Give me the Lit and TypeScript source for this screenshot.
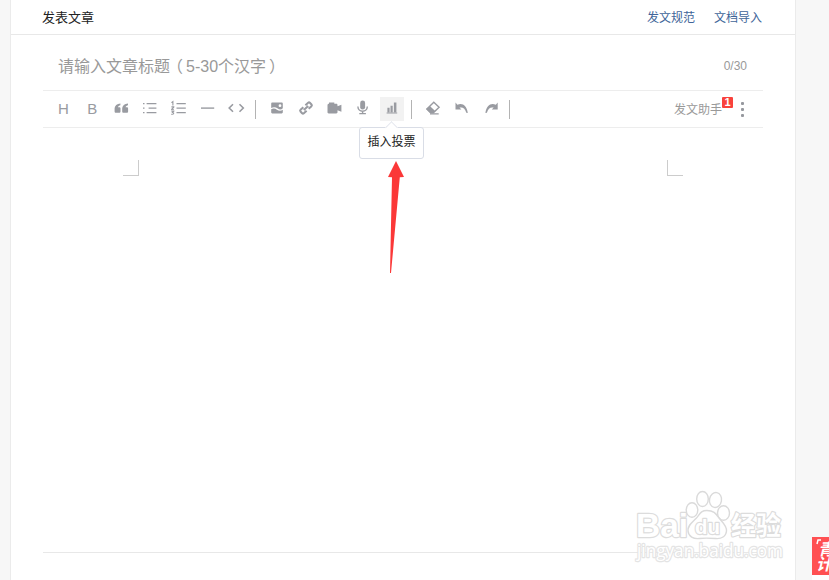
import { LitElement, html, svg, css } from "lit";
import { customElement, property } from "lit/decorators.js";

// Toolbar glyphs, each drawn on a 24x24 grid.
const icons: Record<string, unknown> = {
  quote: svg`<path d="M11.4 6.4C8 6.6 5.6 8.6 5.6 12v2.4c0 .8.5 1.3 1.3 1.3h3.3c.8 0 1.3-.5 1.3-1.3v-2.900c0-.8-.5-1.300-1.300-1.300H9c.2-1.200 1.200-1.800 2.400-2z"/><path d="M19 6.400c-3.400.2-5.800 2.200-5.800 5.600v2.400c0 .8.5 1.300 1.300 1.300h3.300c.8 0 1.300-.5 1.300-1.300v-2.900c0-.8-.5-1.300-1.300-1.300h-1.200c.2-1.200 1.200-1.800 2.400-2z"/>`,
  ul: svg`<path d="M6 5.900h1.500v1.400H6zM9.600 5.900h9.800v1.400H9.600zM6 10.400h1.500v1.400H6zM11.600 10.400h7.800v1.400h-7.800zM6 14.900h1.500v1.400H6zM9.600 14.900h9.800v1.400H9.600z"/>`,
  ol: svg`<path d="M10.500 5.900h9.300v1.400h-9.300zM10.500 10.400h9.300v1.400h-9.300zM10.500 14.900h9.300v1.400h-9.300z"/><path d="M5.400 5.600l1.500-1v4M5.400 9.900h2.400c0 1.200-2.200 1.500-2.200 2.800h2.400M5.400 14.200h2.300l-1.200 1.300c1.800.2 1.700 2.200-1.300 1.700" fill="none" stroke="currentColor" stroke-width="1.100"/>`,
  hr: svg`<path d="M6 10.400h13.200v1.400H6z"/>`,
  code: svg`<path d="M9 7.200L5.200 11 9 14.800M15.500 7.200l3.800 3.800-3.800 3.800" fill="none" stroke="currentColor" stroke-width="1.600"/>`,
  image: svg`<path fill-rule="evenodd" d="M7.300 5.500h9.400c.6 0 1.100.5 1.100 1.100v4.700c-1.500 1.600-3.300 1.600-5 .3-2-1.600-4.400-1.800-6.600-.6V6.600c0-.6.500-1.100 1.100-1.100zM15 7.300a1.400 1.400 0 100 2.800 1.400 1.400 0 000-2.800z"/><path d="M6.200 12.200c2-1.300 4-.9 5.700.5 1.900 1.400 4.100 1.400 5.900.1v2.500c0 .6-.5 1.100-1.100 1.100H7.300c-.6 0-1.100-.5-1.100-1.100z"/>`,
  link: svg`<g transform="rotate(-43 12 11)" fill="none" stroke="currentColor" stroke-width="2"><path d="M10.600 8.600H6.800a1.200 1.200 0 00-1.200 1.200v2.400a1.200 1.200 0 001.200 1.200h3.800M13.400 8.600h3.800a1.200 1.200 0 011.200 1.200v2.400a1.200 1.200 0 01-1.200 1.200h-3.800M9 11h6"/></g>`,
  video: svg`<path d="M7 5.400h5.300v1.400h2c.7 0 1.200.5 1.200 1.200v1.300l3.900-1.500v7l-3.900-1.500v1.900c0 .7-.5 1.200-1.200 1.200H6.700c-.7 0-1.200-.5-1.200-1.200V8c0-.6.500-1.200 1.500-1.200z"/>`,
  mic: svg`<rect x="9.200" y="3.600" width="4.900" height="9" rx="2.450"/><path d="M6.900 9.500c0 6.300 9.400 6.300 9.400 0M11.600 14.300v2.500M8.300 16.600h6.600" fill="none" stroke="currentColor" stroke-width="1.400"/>`,
  chart: svg`<path d="M7.400 10.800h2.200v4.400H7.400zM10.500 8.800h2.200v6.400h-2.200zM13.900 5.600h2.500v9.600h-2.500zM6.600 15.500h10.600v1.100H6.600z"/>`,
  eraser: svg`<path d="M12.800 5.200l5.300 5.100-5.800 5.400H9.600l-3.700-3.700z" fill="none" stroke="currentColor" stroke-width="1.400"/><path d="M8.900 9L14.400 14.200l-2 1.900H9.300l-4.200-4.200zM9 16.200h8.700v1.400H9z"/>`,
  undo: svg`<path d="M5.500 5.600l1.900 2.100c4.900-2 9.300.4 10.400 8.300l-1.500-.3c-1.200-4.500-3.700-5.900-6.800-5.100l1.900 2h-5.900z"/>`,
  redo: svg`<path d="M18.700 5.600l-1.900 2.100c-4.900-2-9.300.4-10.400 8.300l1.500-.3c1.200-4.500 3.700-5.900 6.800-5.100l-1.900 2h5.900z"/>`,
};

@customElement("tool-icon")
class ToolIcon extends LitElement {
  @property() name = "";
  @property({ type: Boolean, reflect: true }) active = false;
  static styles = css`
    :host { display: grid; place-items: center; width: 24px; height: 24px; color: #999ba1; flex: none;
      font: 15px/24px "Liberation Sans", sans-serif; }
    :host([active]) { background: #f2f2f2; }
    svg { display: block; width: 24px; height: 24px; fill: currentColor; }
    span { padding: 0 0 1px 1px; line-height: 22px; }
  `;
  render() {
    return this.name.length === 1
      ? html`<span>${this.name}</span>`
      : html`<svg viewBox="0 0 24 24">${icons[this.name]}</svg>`;
  }
}

@customElement("app-root")
class AppRoot extends LitElement {
  static styles = css`
    * { box-sizing: border-box; }
    :host { display: block; position: relative; width: 829px; height: 580px; overflow: hidden; background: #f7f7f7;
      font-family: "Liberation Sans", "Noto Sans CJK SC", sans-serif; font-size: 12px; color: #222; }
    .panel { margin-left: 10px; width: 786px; height: 580px; background: #fff; border: solid #ebebeb;
      border-width: 0 1px; display: flex; flex-direction: column; }
    .header { height: 35px; border-bottom: 1px solid #e8e8e8; padding: 0 33px 2px 31px; display: flex; align-items: center; }
    .heading { font-size: 13px; flex: 1; }
    .links { display: flex; gap: 19px; color: #406599; }
    .editor { margin: 0 32px; flex: none; height: 518px; border-bottom: 1px solid #e8e8e8; display: flex; flex-direction: column; }
    .title { height: 56px; border-bottom: 1px solid #ededed; padding: 6px 16px 0 15px; display: flex; align-items: center;
      color: #999; }
    .placeholder { font-size: 16px; flex: 1; padding-bottom: 2px; }
    .open { margin: 0 3px 0 -3px; }
    .close { margin-left: 3px; }
    .toolbar { height: 37px; border-bottom: 1px solid #ededed; padding: 0 19px 0 8px; display: flex; align-items: center; }
    .group { display: flex; gap: 4.800px; }
    .sep { width: 1px; height: 19px; background: #b3b3b3; margin: 1px 9px 0 7px; }
    .sep.last { margin-left: 6px; }
    .anchor { position: relative; }
    .tip { position: absolute; z-index: 2; left: -21px; top: 30px; width: 65px; height: 32px; border: 1px solid #d9dde6;
      border-radius: 3px; background: #fff; line-height: 29px; text-align: center; white-space: nowrap; }
    .notch { position: absolute; left: 27px; top: -5px; width: 9px; height: 9px; background: #fff; transform: rotate(45deg);
      border: solid #e4e7ee; border-width: 1px 0 0 1px; }
    .helper { position: relative; margin-left: auto; color: #999; padding-bottom: 2px; }
    .count { position: absolute; left: 48px; top: -3px; width: 11px; height: 11px; border-radius: 1px; background: #f9423c;
      color: #fff; font-size: 11px; font-weight: 700; line-height: 11px; text-align: center; }
    .more { display: grid; gap: 3px; margin-left: 19px; }
    .dot { width: 3px; height: 3px; border-radius: 1px; background: #96989e; }
    .marks { display: flex; justify-content: space-between; padding: 32px 80px 0; }
    .mark { width: 16px; height: 16px; border: solid #ccc; border-width: 0 1px 1px 0; }
    .mark.right { border-width: 0 0 1px 1px; }
    .arrow { position: absolute; left: 386px; top: 160px; width: 20px; height: 115px; }
    .watermark { position: absolute; left: 630px; top: 484px; width: 160px; height: 84px; }
    .mark-text { fill: #fff; stroke: #dcdcdc; stroke-width: 2.400px; paint-order: stroke; stroke-linejoin: round;
      font-family: "Liberation Sans", "Noto Sans CJK SC", sans-serif; font-weight: 700; }
    .host-text { font-family: "Open Sans", sans-serif; font-weight: 400; stroke: #e4e4e4; stroke-width: 2.400px; }
    .side { position: absolute; left: 812px; top: 537px; width: 17px; height: 43px; background: #fff; overflow: hidden; }
    .promo { height: 38px; background: #ff5052; }
    .promo svg { display: block; }
    .promo text { fill: #fff; font: italic 700 16px "Noto Sans CJK SC", sans-serif; }
  `;
  render() {
    const tools = (names: string[]) => names.map((n) => html`<tool-icon name=${n}></tool-icon>`);
    return html`
      <div class="panel">
        <div class="header">
          <div class="heading">发表文章</div>
          <div class="links"><span>发文规范</span><span>文档导入</span></div>
        </div>
        <div class="editor">
          <div class="title"><span class="placeholder">请输入文章标题<span class="open">（</span>5-30个汉字<span class="close">）</span></span><span>0/30</span></div>
          <div class="toolbar">
            <div class="group">${tools(["H", "B", "quote", "ul", "ol", "hr", "code"])}</div>
            <i class="sep"></i>
            <div class="group">
              ${tools(["image", "link", "video", "mic"])}
              <div class="anchor"><tool-icon name="chart" active></tool-icon>
                <div class="tip"><i class="notch"></i>插入投票</div></div>
            </div>
            <i class="sep"></i>
            <div class="group">${tools(["eraser", "undo", "redo"])}</div>
            <i class="sep last"></i>
            <div class="helper">发文助手<span class="count">1</span></div>
            <div class="more"><i class="dot"></i><i class="dot"></i><i class="dot"></i></div>
          </div>
          <div class="marks"><i class="mark"></i><i class="mark right"></i></div>
        </div>
      </div>
      <svg class="arrow" viewBox="0 0 20 115"><path fill="#fb3838" d="M10 1l8 16-4.200.3L5 113H4L6 17.300 2 17z"/></svg>
      <svg class="watermark" viewBox="0 0 160 84">
        <text class="mark-text" x="6" y="53" font-size="34" textLength="52" lengthAdjust="spacingAndGlyphs">Bai</text>
        <g fill="#fff" stroke="#dadada" stroke-width="1.400">
          <ellipse cx="62" cy="26" rx="5.800" ry="7.300"/><ellipse cx="72.500" cy="15" rx="5.800" ry="7.500"/>
          <ellipse cx="85.500" cy="16" rx="6" ry="7.500" transform="rotate(10 85.500 16)"/>
          <ellipse cx="93.500" cy="29" rx="6" ry="7.300"/>
          <path d="M77 26.500c7 0 9 3.500 12 7.500s8 7.500 7.500 13-5 8-11 7.500-10.500-.8-16 0c-6 .8-11-2-11.500-7.500s4-8.500 8-12.500 4-8 11-8z"/>
        </g>
        <text class="mark-text" x="65" y="50" font-size="21" textLength="25" lengthAdjust="spacingAndGlyphs">du</text>
        <text class="mark-text" x="101" y="51" font-size="26" textLength="50" lengthAdjust="spacingAndGlyphs">经验</text>
        <text class="mark-text host-text" x="7" y="73" font-size="18" textLength="146" lengthAdjust="spacingAndGlyphs">jingyan.baidu.com</text>
      </svg>
      <div class="side"><div class="promo"><svg width="17" height="38" viewBox="0 0 17 38">
        <path d="M5 7l1-4h3" fill="none" stroke="#fff" stroke-width="1.500"/>
        <text x="6" y="18">青</text><text x="4" y="33">计</text></svg></div></div>
    `;
  }
}
